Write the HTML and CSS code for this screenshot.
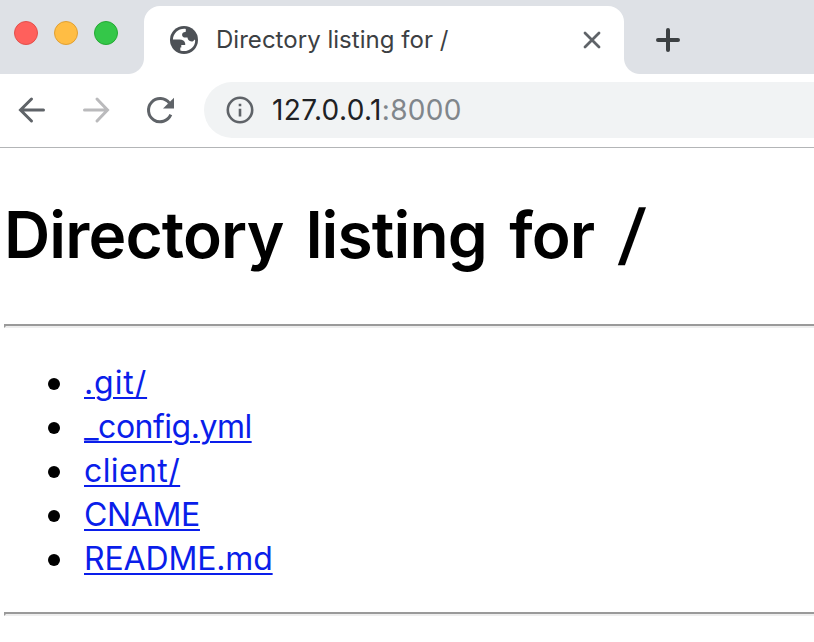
FILE: index.html
```html
<!DOCTYPE html>
<html lang="en">
<head>
<meta charset="utf-8">
<title>Directory listing for /</title>
<link rel="stylesheet" href="styles.css">
</head>
<body>
<header class="strip">
  <div class="lights"><span class="light red"></span><span class="light yellow"></span><span class="light green"></span></div>
  <div class="tab">
    <svg class="globe" viewBox="0 0 28 28"><circle cx="14" cy="14" r="14" fill="#4d5156"/><path fill="#fff" d="M15.8 2.9 C9 2 3.2 7 2.9 13.5 L9.5 13.6 C12.5 13.6 14.8 14.8 15.2 17.6 L15.2 19 L11.3 19 L11.3 21.4 L10.3 21.4 L10.3 24.6 C18 26.8 25.2 21.5 25.2 14.5 L24.6 13.4 C23.8 15 22.2 15.8 20.6 15.3 C18.8 14.8 17.8 13.5 17.5 11.4 L14 11.4 C11.9 10.7 11.4 7.8 13.3 6.5 L15.8 5.8 Z"/></svg>
    <span class="tab-title">Directory listing for /</span>
    <svg class="close" viewBox="0 0 18 18"><path d="M2 2 16 16M16 2 2 16"/></svg>
  </div>
  <svg class="plus" viewBox="0 0 24 24"><path d="M12 2V22M2 12H22"/></svg>
</header>
<nav class="toolbar">
  <svg class="nav-icon" viewBox="0 0 32 32"><path d="M27.5 16H5M15.5 5 4.5 16 15.5 27"/></svg>
  <svg class="nav-icon disabled" viewBox="0 0 32 32"><path d="M4.5 16H27M17 5 27.5 16 17 27"/></svg>
  <svg class="nav-icon" viewBox="0 0 32 32"><path class="arc" d="M25.4 9.2A11.6 11.6 0 1 0 26.8 20.7"/><path class="solid" d="M30 3.7V14.6H19Z"/></svg>
  <div class="address">
    <svg class="info" viewBox="0 0 28 28"><circle cx="14" cy="14" r="12.2"/><path d="M14 7.7V10.3M14 12.8V20.5"/></svg>
    <span class="url">127.0.0.1<span class="port">:8000</span></span>
  </div>
</nav>
<main class="page">
  <h1>Directory listing for <span class="slash">/</span></h1>
  <hr>
  <ul>
    <li><a class="git" href="#">.git/</a></li>
    <li><a class="config" href="#">_config.yml</a></li>
    <li><a class="client" href="#">client/</a></li>
    <li><a class="cname" href="#">CNAME</a></li>
    <li><a class="readme" href="#">README.md</a></li>
  </ul>
  <hr>
</main>
</body>
</html>
```
FILE: styles.css
```css
* { box-sizing: border-box; }
body { margin: 0; height: 642px; overflow: hidden; background: #fff; color: #000; font-family: Inter, "Liberation Sans", sans-serif; }
svg { display: block; flex: none; fill: none; stroke-linecap: round; }
.strip { display: flex; height: 74px; background: #dee1e6; }
.lights { display: flex; gap: 16px; width: 144px; padding: 21px 0 0 14px; }
.light { width: 24px; height: 24px; border-radius: 50%; border: 1px solid; }
.red { background: #ff605c; border-color: #e2504b; }
.yellow { background: #ffbd44; border-color: #e0a033; }
.green { background: #34c749; border-color: #24a934; }
.tab { position: relative; display: flex; align-items: center; width: 480px; height: 68px; margin-top: 6px; padding: 0 23px 0 26px; border-radius: 16px 16px 0 0; background: #fff; }
.tab::before, .tab::after { content: ""; position: absolute; bottom: 0; width: 16px; height: 16px; }
.tab::before { left: -16px; background: radial-gradient(circle at 0 0, #dee1e6 15.5px, #fff 16.5px); }
.tab::after { right: -16px; background: radial-gradient(circle at 100% 0, #dee1e6 15.5px, #fff 16.5px); }
.globe { width: 28px; height: 28px; }
.tab-title { flex: 1; margin-left: 18px; font-size: 24px; line-height: 30px; letter-spacing: 0.03px; color: #3c4043; }
.close { width: 18px; height: 18px; stroke: #5f6368; stroke-width: 2.8; }
.plus { width: 24px; height: 24px; margin: 28px 0 0 32px; stroke: #3c4043; stroke-width: 4; }
.toolbar { display: flex; align-items: center; gap: 32px; height: 74px; padding: 2px 0 3px 16px; border-bottom: 1px solid #b3b5b7; }
.nav-icon { width: 32px; height: 32px; stroke: #5f6368; stroke-width: 3; }
.disabled { stroke: #bababc; }
.arc { stroke-linecap: butt; }
.solid { fill: #5f6368; stroke: none; }
.address { display: flex; align-items: center; flex: 1; height: 56px; margin-left: -4px; padding-left: 22px; border-radius: 28px 0 0 28px; background: #f1f3f4; }
.info { width: 28px; height: 28px; stroke: #5f6368; stroke-width: 2.6; stroke-linecap: butt; }
.url { margin-left: 18px; font-size: 28px; line-height: 34px; letter-spacing: 0.36px; color: #202124; white-space: nowrap; }
.port { color: #80868b; }
.page { padding: 48px 0 0 4px; }
h1 { margin: 0; font-size: 64px; line-height: 78px; font-weight: 600; letter-spacing: -0.85px; word-spacing: 7px; white-space: nowrap; }
.slash { display: inline-block; transform: translate(3px, -1px) skewX(-6deg) scaleY(1.04); }
hr { height: 4px; margin: 50px -4px 0 0; border: 2px solid; border-color: #9a9a9a #eee #eee #9a9a9a; }
ul { margin: 33px 0 31px; padding: 0; list-style: none; }
li { display: flex; align-items: center; height: 44px; padding-left: 44px; }
li::before { content: ""; width: 12px; height: 12px; margin: 2px 24px 0 0; border-radius: 50%; background: #000; }
a { font-size: 32px; line-height: 44px; color: #0a1eea; text-decoration: underline; text-decoration-thickness: 2px; text-underline-offset: 3px; }
.git { letter-spacing: 0.9px; }
.config { letter-spacing: -0.5px; }
.client { letter-spacing: 0.4px; }
.cname { letter-spacing: -0.35px; }
.readme { letter-spacing: -0.15px; }
ul + hr { margin-top: 0; }
```
